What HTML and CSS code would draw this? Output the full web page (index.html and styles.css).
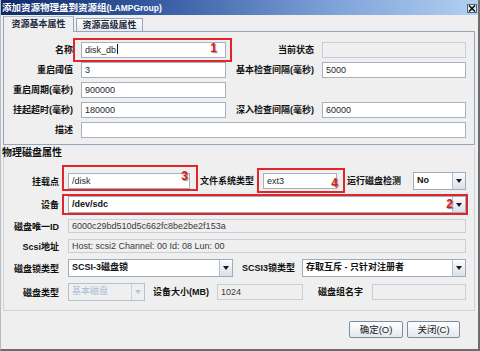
FILE: index.html
```html
<!DOCTYPE html>
<html lang="zh">
<head>
  <meta charset="UTF-8" />
  <title>添加资源物理盘到资源组</title>
  <link rel="stylesheet" href="styles.css">
</head>
<body>
  <div class="dialog">
    <div class="titlebar">
      <span class="title">添加资源物理盘到资源组<span class="en">(LAMPGroup)</span></span>
      <span class="close">
        <svg width="8" height="7" viewBox="0 0 8 7"><path d="M1 0.5 L7 6.5 M7 0.5 L1 6.5" stroke="#111" stroke-width="1.6"/></svg>
      </span>
    </div>

    <div class="tabs">
      <div class="tab on">资源基本属性</div>
      <div class="tab">资源高级属性</div>
    </div>

    <div class="basic">
      <label class="lbl">名称</label>
      <div class="mark">
        <div class="field">disk_db<span class="caret"></span></div>
        <span class="redbox box1"></span>
        <b class="num num1">1</b>
      </div>
      <label class="lbl">当前状态</label>
      <div class="field off"></div>

      <label class="lbl">重启阈值</label>
      <div class="field">3</div>
      <label class="lbl">基本检查间隔(毫秒)</label>
      <div class="field">5000</div>

      <label class="lbl">重启周期(毫秒)</label>
      <div class="field">900000</div>
      <span></span>
      <span></span>

      <label class="lbl">挂起超时(毫秒)</label>
      <div class="field">180000</div>
      <label class="lbl">深入检查间隔(毫秒)</label>
      <div class="field">60000</div>

      <label class="lbl">描述</label>
      <div class="field wide"></div>
    </div>

    <div class="group">
      <div class="group-title">物理磁盘属性</div>
      <div class="rows">
        <div class="frow">
          <span class="flabel">挂载点</span>
          <div class="mark w-mount">
            <div class="field h16">/disk</div>
            <span class="redbox box3"></span>
            <b class="num num3">3</b>
          </div>
          <span class="lbl ml10">文件系统类型</span>
          <div class="mark w-fs ml9">
            <div class="field h16">ext3</div>
            <span class="redbox box4"></span>
            <b class="num num4">4</b>
          </div>
          <span class="lbl ml10">运行磁盘检测</span>
          <div class="combo w-check push">
            <span class="val">No</span><span class="arr"></span>
          </div>
        </div>

        <div class="frow">
          <span class="flabel">设备</span>
          <div class="mark w-full">
            <div class="combo">
              <span class="val">/dev/sdc</span><span class="arr"></span>
            </div>
            <span class="redbox box2"></span>
            <b class="num num2">2</b>
          </div>
        </div>

        <div class="frow">
          <span class="flabel">磁盘唯一ID</span>
          <div class="field off w-full">6000c29bd510d5c662fc8be2be2f153a</div>
        </div>

        <div class="frow">
          <span class="flabel">Scsi地址</span>
          <div class="field off w-full">Host: scsi2 Channel: 00 Id: 08 Lun: 00</div>
        </div>

        <div class="frow">
          <span class="flabel">磁盘锁类型</span>
          <div class="combo w-lock">
            <span class="val">SCSI-3磁盘锁</span><span class="arr"></span>
          </div>
          <span class="lbl ml9">SCSI3锁类型</span>
          <div class="combo w-lock2 push">
            <span class="val">存取互斥 - 只针对注册者</span><span class="arr"></span>
          </div>
        </div>

        <div class="frow">
          <span class="flabel">磁盘类型</span>
          <div class="combo disabled w-type">
            <span class="val">基本磁盘</span><span class="arr"></span>
          </div>
          <span class="lbl ml8">设备大小(MB)</span>
          <div class="field off h16 w-size ml8">1024</div>
          <span class="lbl ml15">磁盘组名字</span>
          <div class="field off h16 w-name push"></div>
        </div>
      </div>
    </div>

    <div class="actions">
      <button class="btn ok">确定(O)</button>
      <button class="btn">关闭(C)</button>
    </div>
  </div>
</body>
</html>
```

FILE: styles.css
```css
* {
  box-sizing: border-box;
}

body {
  margin: 0;
  background: #fff;
  font-family: "Liberation Sans", "Noto Sans CJK SC", sans-serif;
  font-size: 9px;
  color: #111;
}

.dialog {
  width: 480px;
  height: 351px;
  background: #efefef;
  border-left: 1px solid #b8bcc0;
  border-right: 2px solid #6c6c6c;
  border-bottom: 2px solid #6c6c6c;
  overflow: hidden;
}

/* title bar */
.titlebar {
  height: 15px;
  display: flex;
  align-items: center;
  justify-content: space-between;
  padding: 0 1px;
  background: linear-gradient(90deg, #0e2a68 0%, #3a60a6 35%, #7fa2d8 70%, #b3d0f2 100%);
}

.title {
  color: #fff;
  font-weight: bold;
  font-size: 9.5px;
  line-height: 15px;
  white-space: nowrap;
}

.title .en {
  font-size: 8.5px;
}

.close {
  width: 10px;
  height: 9px;
  margin-top: 2px;
  background: #e4ebf3;
  border: 1px solid #56667c;
  display: flex;
  align-items: center;
  justify-content: center;
}

.close svg {
  display: block;
}

/* tabs */
.tabs {
  display: flex;
  align-items: flex-start;
  gap: 2px;
  height: 17px;
  padding-left: 2px;
  margin-bottom: -1px;
  position: relative;
  z-index: 1;
}

.tab {
  margin-top: 3px;
  height: 13px;
  width: 67px;
  border: 1px solid #94a6bb;
  border-bottom: none;
  background: linear-gradient(#fdfdfd, #e6eaee);
  font-size: 9px;
  font-weight: bold;
  line-height: 12px;
  text-align: center;
  color: #1c2a3c;
}

.tab.on {
  margin-top: 1px;
  height: 16px;
  width: 71px;
  background: #efefef;
  border-top-color: #a8b8ca;
  line-height: 14px;
}

/* basic attributes panel */
.basic {
  margin: 0 3px 0 2px;
  border: 1px solid #94a6bb;
  padding: 10px 0 6px 0;
  display: grid;
  grid-template-columns: 69px 145px 80px 144px;
  grid-auto-rows: 16px;
  column-gap: 8px;
  row-gap: 4px;
}

.lbl {
  font-weight: bold;
  line-height: 16px;
  white-space: nowrap;
  text-align: right;
}

.field {
  height: 16px;
  border: 1px solid #a3b1c1;
  background: #fff;
  padding: 0 3px;
  line-height: 14px;
  white-space: nowrap;
  overflow: hidden;
  color: #262626;
}

.field.off {
  background: #efefef;
  border-color: #c7ced6;
  color: #3a3a3a;
}

.field.wide {
  grid-column: 2 / 5;
}

.caret {
  display: inline-block;
  width: 1px;
  height: 10px;
  background: #111;
  vertical-align: -1px;
  margin-left: 1px;
}

/* annotation marks */
.mark {
  position: relative;
}

.redbox {
  position: absolute;
  border: 2px solid #e0262a;
  pointer-events: none;
}

.box1 { left: -8px; right: -6px; top: -4px; bottom: -4px; }
.box2 { left: -6px; right: -2px; top: -2px; bottom: -2px; }
.box3 { left: -6px; right: -8px; top: -8px; bottom: -2px; }
.box4 { left: -6px; right: -8px; top: -5px; bottom: -4px; }

.num {
  position: absolute;
  font-size: 12px;
  line-height: 12px;
  font-weight: bold;
  color: #d41c1c;
  text-shadow: 1px 1px 1px #8a8a8a;
}

.num1 { right: 9px; top: 0; }
.num2 { right: 13px; top: 2px; }
.num3 { right: 2px; top: -3px; }
.num4 { right: -1px; top: 4px; }

/* physical disk group */
.group {
  margin: 2px 3px 0 2px;
  border: 1px solid #cdd3da;
  border-top: none;
  padding: 0 8px 9px 0;
}

.group-title {
  font-size: 10px;
  font-weight: bold;
  line-height: 12px;
  margin-left: -2px;
}

.rows {
  margin-top: 13px;
  display: grid;
  grid-template-rows: 18px 17px 14px 14px 18px 18px;
  row-gap: 6px;
}

.frow {
  display: flex;
  align-items: center;
}

.flabel {
  width: 55px;
  margin-right: 9px;
  text-align: right;
  font-weight: bold;
  white-space: nowrap;
}

.frow .field.off {
  height: 14px;
  line-height: 12px;
}

.frow .field.h16 {
  height: 16px;
  line-height: 14px;
}

.combo {
  height: 17px;
  display: flex;
  border: 1px solid #9eadbd;
  background: #fff;
  font-weight: bold;
}

.frow > .combo {
  height: 18px;
}

.combo .val {
  flex: 1;
  padding-left: 3px;
  line-height: 15px;
  white-space: nowrap;
  overflow: hidden;
}

.combo .arr {
  width: 13px;
  border-left: 1px solid #b4c0cc;
  background: linear-gradient(#fafbfc, #d9e1ea);
  display: flex;
  align-items: center;
  justify-content: center;
}

.combo .arr::after {
  content: "";
  border-left: 3px solid transparent;
  border-right: 3px solid transparent;
  border-top: 4px solid #1a1a1a;
}

.combo.disabled {
  background: #efefef;
  border-color: #b4c2d0;
  color: #a6bdd4;
  font-weight: normal;
}

.combo.disabled .arr {
  background: #efefef;
  border-left-color: #c8d2dc;
}

.combo.disabled .arr::after {
  border-top-color: #b4c4d4;
}

.w-mount { width: 122px; }
.w-fs { width: 74px; }
.w-check { width: 53px; }
.w-full { width: 398px; }
.w-lock { width: 165px; }
.w-lock2 { width: 164px; }
.w-type { width: 77px; }
.w-size { width: 86px; }
.w-name { width: 94px; }

.ml8 { margin-left: 8px; }
.ml9 { margin-left: 9px; }
.ml10 { margin-left: 10px; }
.ml15 { margin-left: 15px; }
.push { margin-left: auto; }

/* buttons */
.actions {
  display: flex;
  justify-content: flex-end;
  gap: 4px;
  padding: 10px 18px 0 0;
}

.btn {
  width: 53px;
  height: 17px;
  padding: 0;
  border: 1px solid #7b8da3;
  border-radius: 2px;
  background: linear-gradient(#ffffff, #e3e8ee);
  font-family: "Liberation Sans", "Noto Sans CJK SC", sans-serif;
  font-size: 9.5px;
  line-height: 15px;
  color: #1a1a1a;
}

.btn.ok {
  width: 54px;
}
```
